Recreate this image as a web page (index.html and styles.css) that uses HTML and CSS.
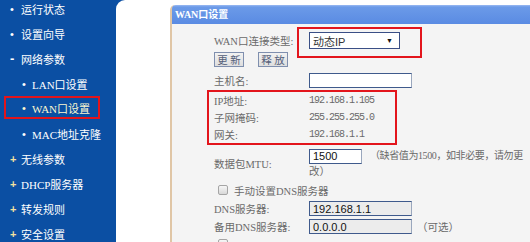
FILE: index.html
```html
<!DOCTYPE html>
<html lang="zh">
<head>
<meta charset="utf-8">
<link rel="stylesheet" href="styles.css">
</head>
<body>
<nav class="sidebar">
  <ul class="menu">
    <li class="item"><span class="mark dot">•</span>运行状态</li>
    <li class="item"><span class="mark dot">•</span>设置向导</li>
    <li class="item"><span class="mark dash">-</span>网络参数</li>
    <li class="item sub"><span class="mark dot">•</span>LAN口设置</li>
    <li class="item sub active"><span class="mark dot">•</span>WAN口设置</li>
    <li class="item sub"><span class="mark dot">•</span>MAC地址克隆</li>
    <li class="item"><span class="mark plus">+</span>无线参数</li>
    <li class="item"><span class="mark plus">+</span>DHCP服务器</li>
    <li class="item"><span class="mark plus">+</span>转发规则</li>
    <li class="item"><span class="mark plus">+</span>安全设置</li>
  </ul>
</nav>
<main class="content">
  <section class="panel">
    <div class="title">WAN口设置</div>
    <div class="form">
      <div class="row r-type">
        <span class="label">WAN口连接类型:</span>
        <span class="hl"><span class="select">动态IP<span class="arrow">▼</span></span></span>
      </div>
      <div class="row r-btn">
        <span class="btn">更 新</span><span class="btn">释 放</span>
      </div>
      <div class="row r-host">
        <span class="label">主机名:</span><span class="input"></span>
      </div>
      <div class="box">
        <div class="row r-info"><span class="label">IP地址:</span><span class="val">192.168.1.105</span></div>
        <div class="row r-info"><span class="label">子网掩码:</span><span class="val">255.255.255.0</span></div>
        <div class="row r-info"><span class="label">网关:</span><span class="val">192.168.1.1</span></div>
      </div>
      <div class="row r-mtu">
        <span class="label">数据包MTU:</span>
        <span class="mtu-val"><span class="input short">1500</span><span class="note">（缺省值为1500，如非必要，请勿更</span><br><span class="note2">改）</span></span>
      </div>
      <div class="row r-check">
        <span class="check"></span><span class="check-text">手动设置DNS服务器</span>
      </div>
      <div class="row r-dns">
        <span class="label">DNS服务器:</span><span class="input gray">192.168.1.1</span>
      </div>
      <div class="row r-dns">
        <span class="label">备用DNS服务器:</span><span class="input gray">0.0.0.0</span><span class="opt">（可选）</span>
      </div>
      <div class="row r-check2">
        <span class="check"></span>
      </div>
    </div>
  </section>
</main>
</body>
</html>
```

FILE: styles.css
```css
html, body {
  margin: 0;
  padding: 0;
}
body {
  width: 530px;
  height: 242px;
  overflow: hidden;
  display: flex;
  background: #0b4fa3;
  font-family: "Liberation Serif", "Noto Sans CJK SC", serif;
}
.sidebar {
  width: 116px;
  flex: none;
  background: #0b4fa3;
}
.menu {
  list-style: none;
  margin: -4px 0 0;
  padding: 0;
}
.item {
  height: 25px;
  display: flex;
  align-items: center;
  padding-left: 10px;
  color: #ffffff;
  font-size: 11px;
  white-space: nowrap;
}
.mark {
  width: 11px;
  flex: none;
  font-family: "Liberation Sans", sans-serif;
}
.dot { font-size: 11px; }
.dash { font-weight: bold; font-size: 13px; }
.plus { color: #f4e2a0; font-weight: bold; font-size: 11px; }
.sub { padding-left: 22px; }
.sub .mark { width: 10px; }
.active {
  margin-left: 4px;
  width: 96px;
  height: 23px;
  margin-bottom: 2px;
  box-sizing: border-box;
  border: 2px solid #e3151c;
  padding-left: 16px;
  color: #fbf7cf;
}
.content {
  flex: 1;
  display: flex;
  background: #ffffff;
  border-top-left-radius: 9px;
  padding-left: 54px;
}
.panel {
  flex: 1;
  margin-top: 5px;
  background: #f4f4f4;
  border-left: 2px solid #e0c6a6;
  border-top-left-radius: 5px;
}
.title {
  height: 19px;
  line-height: 19px;
  background: linear-gradient(#9bbaf2 0, #6b9ae8 2px, #5a8be3 100%);
  color: #ffffff;
  font-size: 10px;
  font-weight: bold;
  padding-left: 3px;
  border-top-left-radius: 4px;
  white-space: nowrap;
}
.form {
  padding-left: 42px;
  color: #6a6a6a;
  font-size: 10.5px;
}
.row {
  display: flex;
  align-items: center;
  white-space: nowrap;
}
.label {
  width: 95px;
  flex: none;
}
.r-type { margin-top: 8px; height: 17px; }
.hl { position: relative; display: inline-flex; }
.hl::after {
  content: "";
  position: absolute;
  left: -12px;
  right: -22px;
  top: -5px;
  bottom: -9px;
  border: 2px solid #e3151c;
}
.select {
  width: 91px;
  height: 17px;
  box-sizing: border-box;
  border: 1px solid #3a4f86;
  background: #ffffff;
  display: flex;
  align-items: center;
  padding-left: 3px;
  color: #333;
  font-family: "Liberation Sans", "Noto Sans CJK SC", sans-serif;
  font-size: 11px;
}
.arrow {
  margin-left: auto;
  margin-right: 6px;
  font-size: 7px;
  color: #111;
}
.r-btn { margin-top: 3px; gap: 14px; }
.btn {
  width: 30px;
  height: 15px;
  box-sizing: border-box;
  border: 1px solid #7f8fae;
  background: linear-gradient(#f2f2f2, #dedede);
  color: #55607a;
  font-size: 10.5px;
  display: flex;
  align-items: center;
  justify-content: center;
}
.r-host { margin-top: 6px; }
.input {
  height: 15px;
  width: 103px;
  box-sizing: border-box;
  border: 1px solid #3f5a8c;
  border-right-color: #9aa7bd;
  background: #ffffff;
  display: inline-flex;
  align-items: center;
  padding-left: 3px;
  color: #111;
  font-family: "Liberation Sans", sans-serif;
  font-size: 11px;
  vertical-align: middle;
}
.input.short { width: 53px; }
.input.gray { background: #ececec; }
.box {
  margin-top: 2px;
  margin-left: -7px;
  width: 190px;
  box-sizing: border-box;
  border: 2px solid #e3151c;
  padding-left: 5px;
}
.r-info { height: 17px; }
.val {
  font-family: "Liberation Mono", monospace;
  font-size: 10px;
  letter-spacing: -1px;
  color: #6a6a6a;
}
.r-mtu { margin-top: 3px; }
.mtu-val { line-height: 15px; }
.note {
  margin-left: 8px;
  font-size: 10px;
  letter-spacing: -0.4px;
}
.r-check { margin-top: 3px; height: 16px; }
.check {
  width: 8px;
  height: 8px;
  margin-left: 4px;
  border: 1px solid #a5a5a5;
  border-radius: 2px;
  background: linear-gradient(#f6f6f6, #d8d8d8);
  flex: none;
}
.check-text { margin-left: 6px; }
.r-dns { margin-top: 3px; }
.opt { margin-left: 5px; }
.r-check2 { margin-top: 5px; }
```
